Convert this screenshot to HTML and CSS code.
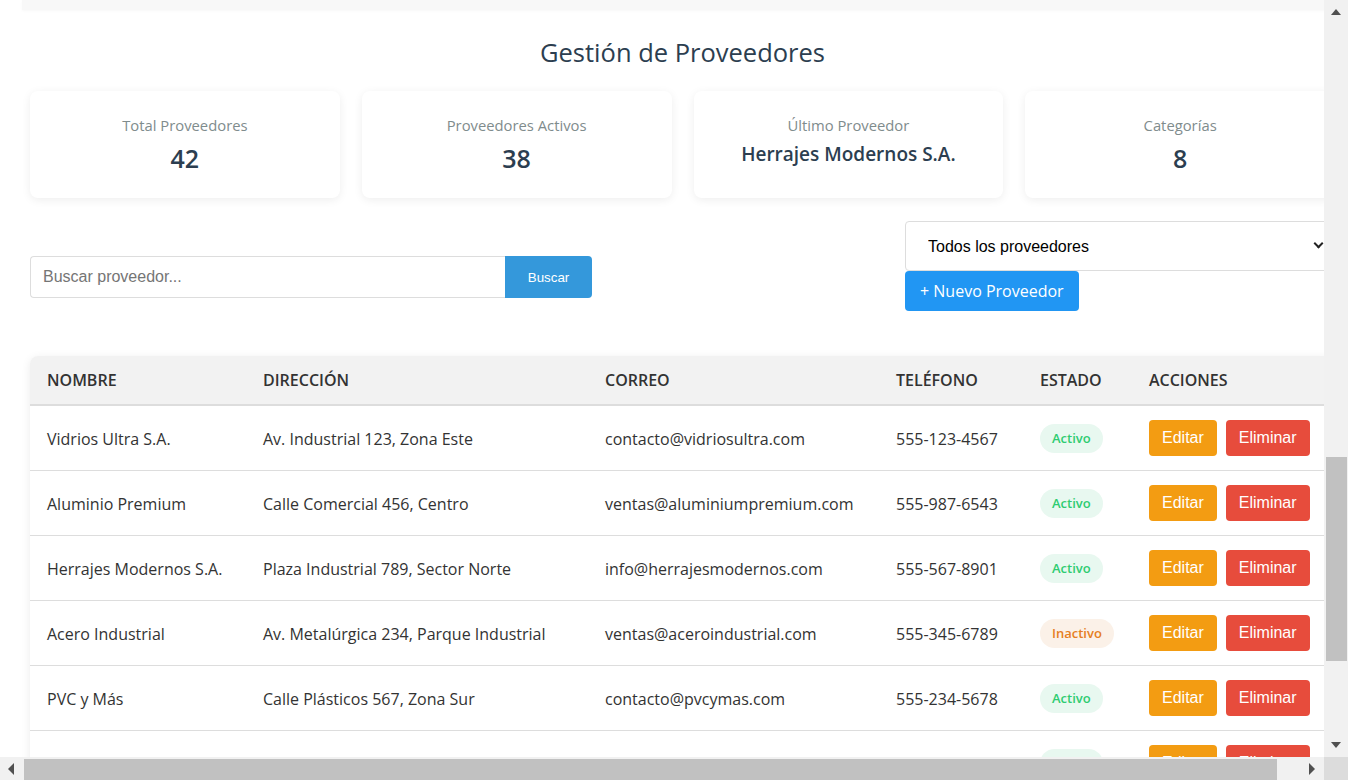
FILE: index.html
```html
<!DOCTYPE html>
<html lang="es">
<head>
<meta charset="utf-8">
<title>Gestión de Proveedores</title>
<link rel="stylesheet" href="styles.css">
</head>
<body>
<div class="app">
  <div class="viewport">
    <div class="page">
      <div class="container">
        <div class="top-strip"></div>
        <main class="main">
          <h1 class="title">Gestión de Proveedores</h1>

          <div class="stats">
            <div class="stat-card">
              <div class="stat-label">Total Proveedores</div>
              <div class="stat-value">42</div>
            </div>
            <div class="stat-card">
              <div class="stat-label">Proveedores Activos</div>
              <div class="stat-value">38</div>
            </div>
            <div class="stat-card">
              <div class="stat-label">Último Proveedor</div>
              <div class="stat-value stat-value-text">Herrajes Modernos S.A.</div>
            </div>
            <div class="stat-card">
              <div class="stat-label">Categorías</div>
              <div class="stat-value">8</div>
            </div>
          </div>

          <div class="toolbar">
            <div class="search">
              <input class="search-input" type="text" placeholder="Buscar proveedor...">
              <button class="search-btn">Buscar</button>
            </div>
            <div class="filter-actions">
              <div class="select-wrap">
                <select class="filter-select">
                  <option>Todos los proveedores</option>
                  <option>Activos</option>
                  <option>Inactivos</option>
                </select>
              </div>
              <button class="new-btn">+ Nuevo Proveedor</button>
            </div>
          </div>

          <div class="table-wrap">
            <table class="table">
              <colgroup>
                <col class="c-nombre">
                <col class="c-dir">
                <col class="c-correo">
                <col class="c-tel">
                <col class="c-estado">
                <col class="c-acc">
              </colgroup>
              <thead>
                <tr>
                  <th>Nombre</th>
                  <th>Dirección</th>
                  <th>Correo</th>
                  <th>Teléfono</th>
                  <th>Estado</th>
                  <th>Acciones</th>
                </tr>
              </thead>
              <tbody>
                <tr>
                  <td>Vidrios Ultra S.A.</td>
                  <td>Av. Industrial 123, Zona Este</td>
                  <td>contacto@vidriosultra.com</td>
                  <td>555-123-4567</td>
                  <td><span class="badge badge-on">Activo</span></td>
                  <td><div class="actions"><button class="btn btn-edit">Editar</button><button class="btn btn-del">Eliminar</button></div></td>
                </tr>
                <tr>
                  <td>Aluminio Premium</td>
                  <td>Calle Comercial 456, Centro</td>
                  <td>ventas@aluminiumpremium.com</td>
                  <td>555-987-6543</td>
                  <td><span class="badge badge-on">Activo</span></td>
                  <td><div class="actions"><button class="btn btn-edit">Editar</button><button class="btn btn-del">Eliminar</button></div></td>
                </tr>
                <tr>
                  <td>Herrajes Modernos S.A.</td>
                  <td>Plaza Industrial 789, Sector Norte</td>
                  <td>info@herrajesmodernos.com</td>
                  <td>555-567-8901</td>
                  <td><span class="badge badge-on">Activo</span></td>
                  <td><div class="actions"><button class="btn btn-edit">Editar</button><button class="btn btn-del">Eliminar</button></div></td>
                </tr>
                <tr>
                  <td>Acero Industrial</td>
                  <td>Av. Metalúrgica 234, Parque Industrial</td>
                  <td>ventas@aceroindustrial.com</td>
                  <td>555-345-6789</td>
                  <td><span class="badge badge-off">Inactivo</span></td>
                  <td><div class="actions"><button class="btn btn-edit">Editar</button><button class="btn btn-del">Eliminar</button></div></td>
                </tr>
                <tr>
                  <td>PVC y Más</td>
                  <td>Calle Plásticos 567, Zona Sur</td>
                  <td>contacto@pvcymas.com</td>
                  <td>555-234-5678</td>
                  <td><span class="badge badge-on">Activo</span></td>
                  <td><div class="actions"><button class="btn btn-edit">Editar</button><button class="btn btn-del">Eliminar</button></div></td>
                </tr>
                <tr>
                  <td>Cristalería Central</td>
                  <td>Av. Reforma 890, Zona Centro</td>
                  <td>ventas@cristaleriacentral.com</td>
                  <td>555-876-5432</td>
                  <td><span class="badge badge-on">Activo</span></td>
                  <td><div class="actions"><button class="btn btn-edit">Editar</button><button class="btn btn-del">Eliminar</button></div></td>
                </tr>
              </tbody>
            </table>
          </div>
        </main>
      </div>
    </div>
  </div>

  <div class="vscroll">
    <div class="sb-btn"><span class="arrow arrow-up"></span></div>
    <div class="vtrack"><div class="vthumb"></div></div>
    <div class="sb-btn"><span class="arrow arrow-down"></span></div>
  </div>

  <div class="hscroll">
    <div class="sb-btn sb-btn-h"><span class="arrow arrow-left"></span></div>
    <div class="htrack"><div class="hthumb"></div></div>
    <div class="sb-btn sb-btn-h"><span class="arrow arrow-right"></span></div>
  </div>

  <div class="corner"></div>
</div>
</body>
</html>
```

FILE: styles.css
```css
html, body {
  margin: 0;
  padding: 0;
  background: #ffffff;
}

body {
  font-family: "Open Sans", "Liberation Sans", Arial, sans-serif;
  color: #333333;
}

/* window frame: viewport + scrollbars */
.app {
  display: grid;
  grid-template-columns: 1324px 24px;
  grid-template-rows: 757px 23px;
  width: 1348px;
  height: 780px;
  overflow: hidden;
}

.viewport {
  overflow: hidden;
  background: #ffffff;
}

.vscroll {
  display: flex;
  flex-direction: column;
  background: #f1f1f1;
}

.hscroll {
  display: flex;
  background: #f1f1f1;
}

.corner {
  background: #dcdcdc;
}

.sb-btn {
  flex: 0 0 24px;
  height: 24px;
  display: flex;
  align-items: center;
  justify-content: center;
}

.sb-btn-h {
  height: 23px;
  width: 24px;
}

.vtrack {
  flex: 1;
  padding-top: 433px;
  box-sizing: border-box;
}

.vthumb {
  height: 204px;
  margin: 0 1px 0 2px;
  background: #c1c1c1;
}

.htrack {
  flex: 1;
}

.hthumb {
  width: 1253px;
  height: 21px;
  margin-top: 2px;
  background: #c1c1c1;
}

.arrow {
  display: block;
  width: 0;
  height: 0;
}

.arrow-up {
  border-left: 5.5px solid transparent;
  border-right: 5.5px solid transparent;
  border-bottom: 6px solid #505050;
}

.arrow-down {
  border-left: 5.5px solid transparent;
  border-right: 5.5px solid transparent;
  border-top: 6px solid #505050;
}

.arrow-left {
  border-top: 6px solid transparent;
  border-bottom: 6px solid transparent;
  border-right: 6px solid #505050;
  margin-right: 2px;
}

.arrow-right {
  border-top: 6px solid transparent;
  border-bottom: 6px solid transparent;
  border-left: 6px solid #505050;
}

/* page */
.page {
  width: 1348px;
}

.container {
  margin-left: 22px;
  width: 1321px;
}

.top-strip {
  height: 10px;
  background: #f8f8f8;
  box-shadow: 0 1px 3px rgba(0, 0, 0, 0.03);
}

.main {
  padding: 24px 8px 40px;
}

.title {
  margin: 0;
  font-size: 25.5px;
  line-height: 36px;
  font-weight: 400;
  color: #2c3e50;
  text-align: center;
}

.stats {
  margin-top: 21px;
  display: grid;
  grid-template-columns: repeat(4, 1fr);
  gap: 22px;
}

.stat-card {
  background: #ffffff;
  border-radius: 8px;
  box-shadow: 0 2px 10px rgba(0, 0, 0, 0.07);
  padding: 24px 20px 23px;
  text-align: center;
}

.stat-label {
  font-size: 14.8px;
  line-height: 20px;
  color: #7f8c8d;
  margin-bottom: 6px;
}

.stat-value {
  font-size: 25px;
  line-height: 34px;
  font-weight: 600;
  color: #2c3e50;
}

.stat-value-text {
  font-size: 19px;
  line-height: 26px;
}

.toolbar {
  margin-top: 23px;
  display: flex;
  justify-content: space-between;
  align-items: flex-start;
}

.search {
  display: flex;
  margin-top: 35px;
}

.search-input {
  box-sizing: border-box;
  width: 475px;
  height: 42px;
  padding: 0 12px;
  border: 1px solid #dddddd;
  border-right: none;
  border-radius: 4px 0 0 4px;
  font-family: "Liberation Sans", Arial, sans-serif;
  font-size: 16px;
  color: #333333;
  outline: none;
}

.search-input::placeholder {
  color: #757575;
}

.search-btn {
  box-sizing: border-box;
  width: 87px;
  height: 42px;
  border: none;
  border-radius: 0 4px 4px 0;
  background: #3498db;
  color: #ffffff;
  font-family: "Liberation Sans", Arial, sans-serif;
  font-size: 13.333px;
  cursor: pointer;
}

.filter-actions {
  width: 430px;
  display: flex;
  flex-direction: column;
  align-items: flex-start;
}

.select-wrap {
  position: relative;
  width: 100%;
}

.select-wrap::after {
  content: "";
  position: absolute;
  right: 13px;
  top: 19px;
  width: 5px;
  height: 5px;
  border-right: 2px solid #222222;
  border-bottom: 2px solid #222222;
  transform: rotate(45deg);
  pointer-events: none;
}

.filter-select {
  box-sizing: border-box;
  display: block;
  width: 100%;
  height: 50px;
  padding: 0 22px;
  border: 1px solid #dddddd;
  border-radius: 4px;
  background: #ffffff;
  font-family: "Liberation Sans", Arial, sans-serif;
  font-size: 16px;
  color: #000000;
  appearance: none;
  -webkit-appearance: none;
}

.new-btn {
  box-sizing: border-box;
  height: 40px;
  padding: 0 15px;
  border: none;
  border-radius: 4px;
  background: #2196f3;
  color: #ffffff;
  font-family: "Open Sans", "Liberation Sans", sans-serif;
  font-size: 16px;
  line-height: 20px;
  cursor: pointer;
}

.table-wrap {
  margin-top: 45px;
  background: #ffffff;
  border-radius: 8px;
  box-shadow: 0 2px 10px rgba(0, 0, 0, 0.08);
  overflow: hidden;
}

.table {
  width: 100%;
  border-collapse: collapse;
  table-layout: fixed;
}

.c-nombre { width: 216px; }
.c-dir { width: 342px; }
.c-correo { width: 291px; }
.c-tel { width: 144px; }
.c-estado { width: 109px; }
.c-acc { width: 203px; }

.table th {
  background: #f2f2f2;
  padding: 15px 17px 14px;
  line-height: 19px;
  font-size: 16px;
  font-weight: 600;
  text-transform: uppercase;
  text-align: left;
  color: #333333;
  border-bottom: 2px solid #dddddd;
  white-space: nowrap;
}

.table td {
  padding: 14px 17px;
  font-size: 16px;
  line-height: 20px;
  color: #333333;
  border-bottom: 1px solid #dddddd;
  white-space: nowrap;
  vertical-align: middle;
}

.table td:nth-child(-n+4) {
  padding-top: 15px;
  padding-bottom: 13px;
}

.badge {
  display: inline-block;
  padding: 5px 12px;
  border-radius: 15px;
  font-size: 13px;
  line-height: 19px;
  font-weight: 600;
}

.badge-on {
  background: #e8f8f0;
  color: #2ecc71;
}

.badge-off {
  background: #fbf1e8;
  color: #e67e22;
}

.actions {
  display: flex;
  gap: 9px;
}

.btn {
  box-sizing: border-box;
  height: 36px;
  padding: 0 13px;
  border: none;
  border-radius: 4px;
  color: #ffffff;
  font-family: "Liberation Sans", Arial, sans-serif;
  font-size: 16px;
  cursor: pointer;
}

.btn-edit {
  background: #f39c12;
}

.btn-del {
  background: #e74c3c;
}
```
